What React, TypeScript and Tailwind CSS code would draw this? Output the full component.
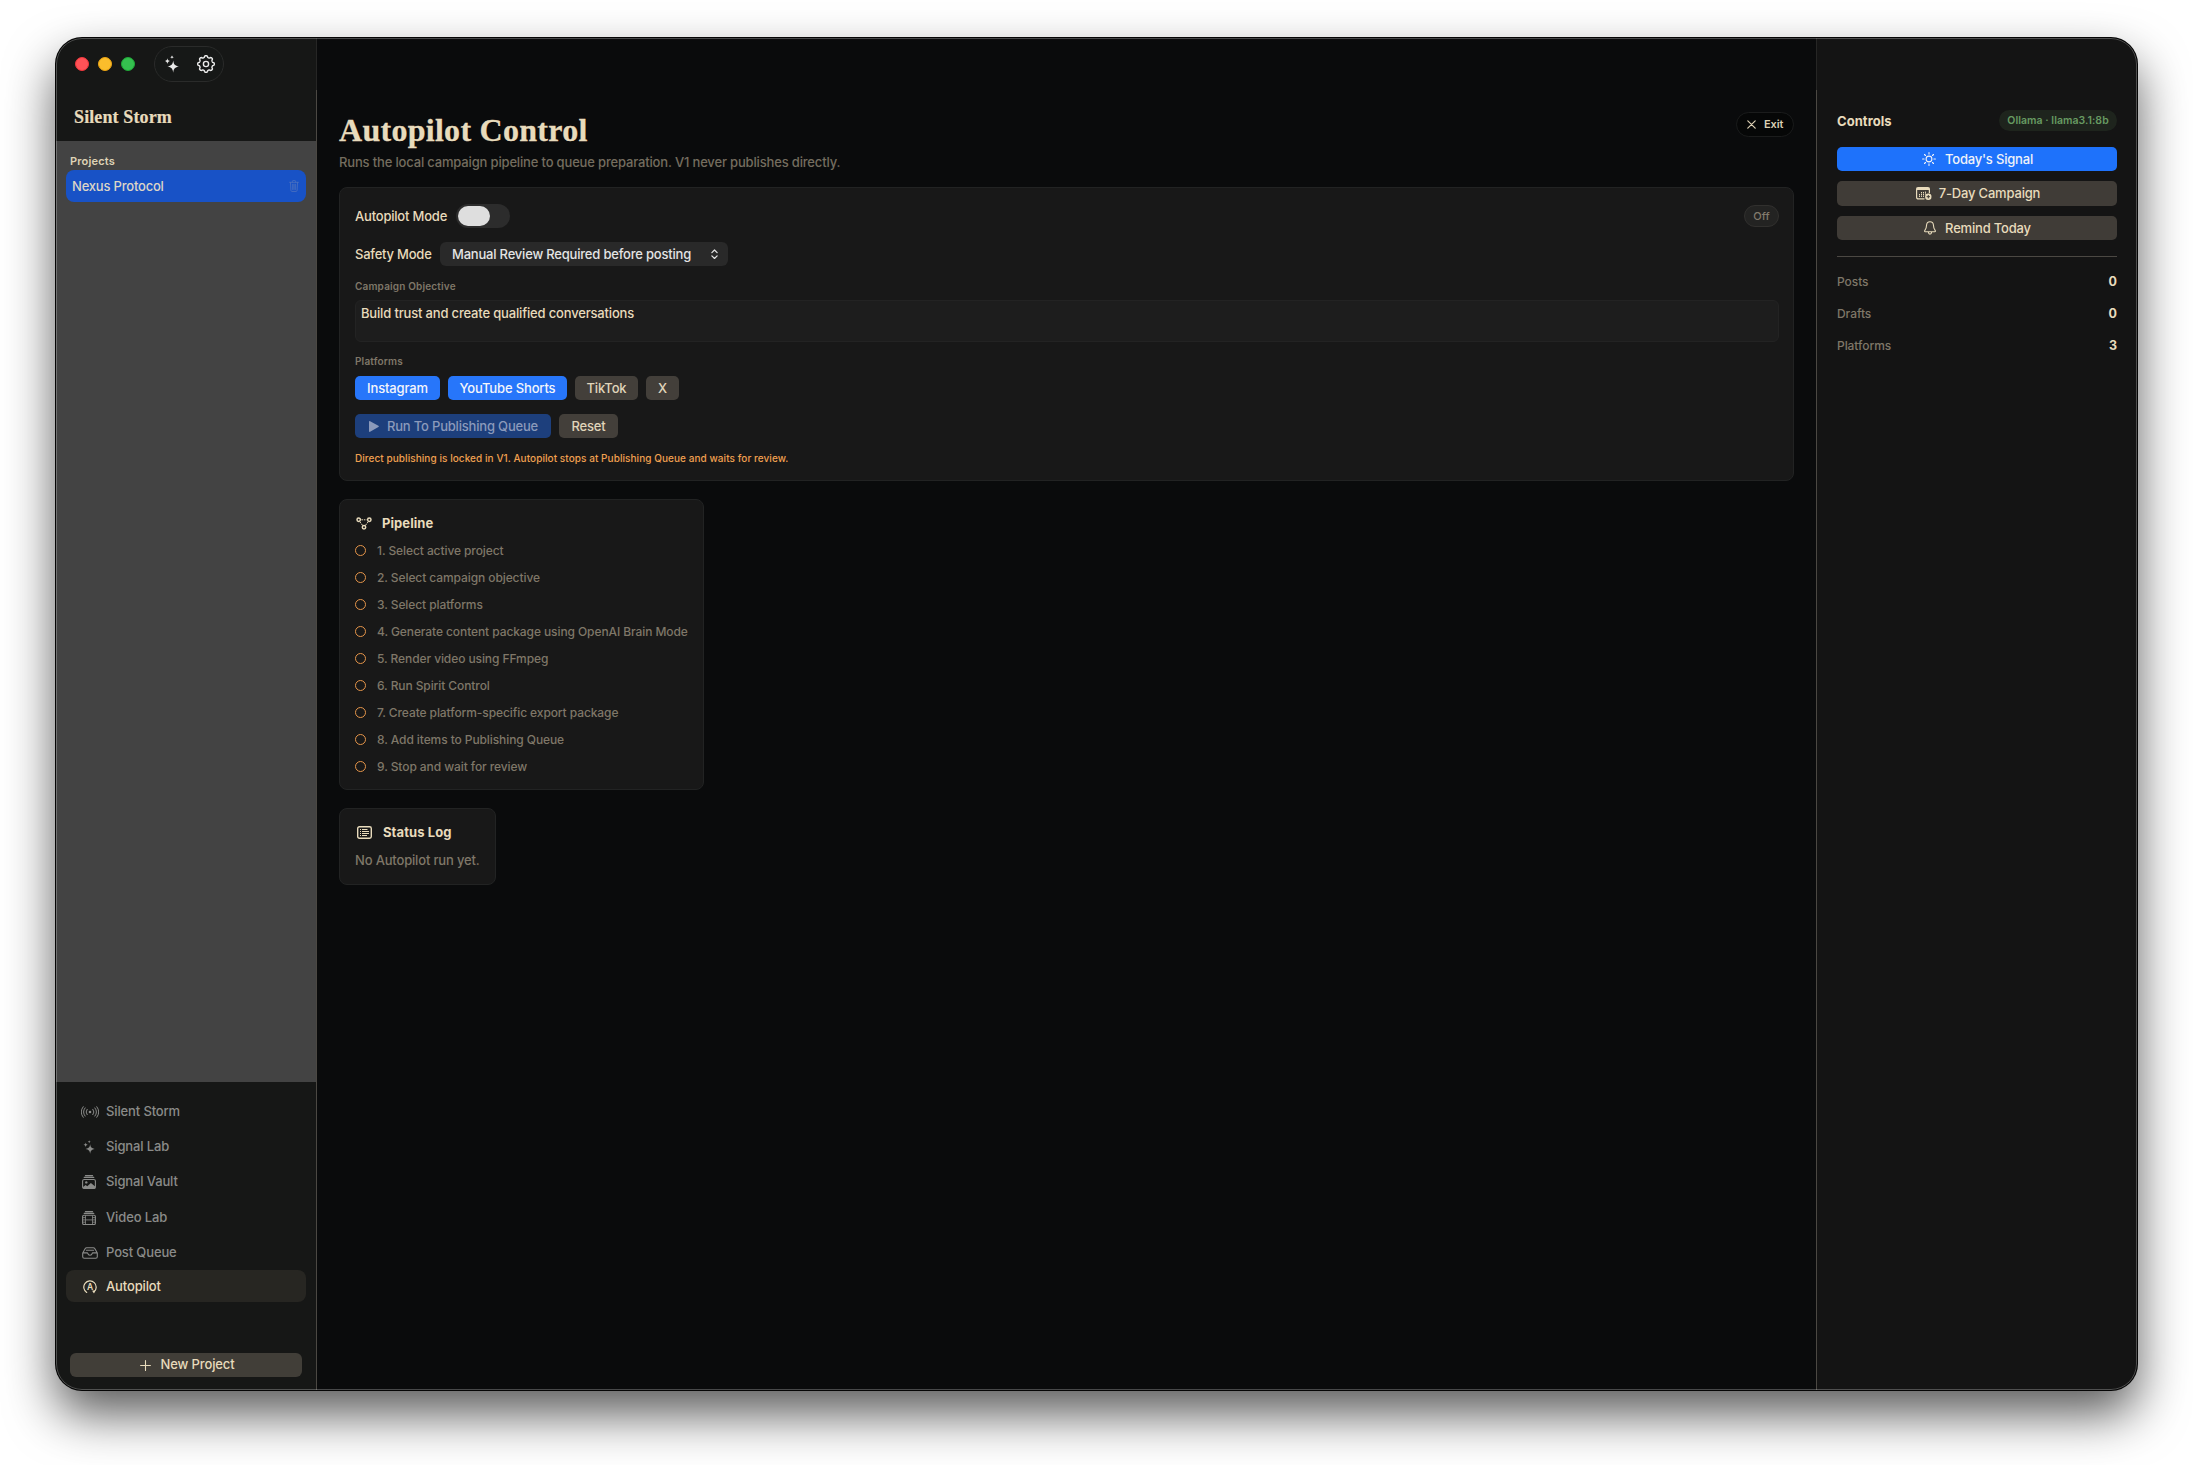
import type { ReactNode } from 'react'
import clsx from 'clsx'

type IconProps = { className?: string }

function Sparkles({ className }: IconProps) {
  return (
    <svg viewBox="0 0 16 18" fill="currentColor" className={className}>
      <path d="M9.2 5.6c.5 3.8 1.8 5.3 5.8 6-4 .7-5.3 2.2-5.8 6.1-.5-3.900-1.800-5.400-5.800-6.100 4-.700 5.300-2.200 5.800-6z" />
      <path d="M3.400 3.200c.3 1.800 1 2.500 2.900 2.900-1.900.4-2.600 1.100-2.900 3-.3-1.900-1-2.600-2.900-3 1.900-.4 2.600-1.100 2.900-2.900z" />
      <path d="M8 .300c.2 1.200.7 1.700 1.900 1.900-1.200.2-1.700.7-1.900 1.900-.2-1.200-.7-1.700-1.900-1.900 1.200-.2 1.700-.7 1.900-1.900z" />
    </svg>
  )
}

const gearPoints = Array.from({ length: 96 }, (_, i) => {
  const a = (i / 96) * Math.PI * 2
  const r = 7.5 + 0.85 * Math.tanh(2 * Math.cos(8 * a))
  return `${(9 + r * Math.cos(a)).toFixed(2)},${(9 + r * Math.sin(a)).toFixed(2)}`
}).join(' ')

function Gear({ className }: IconProps) {
  return (
    <svg viewBox="0 0 18 18" fill="none" stroke="currentColor" strokeWidth="1.4" strokeLinejoin="round" className={className}>
      <polygon points={gearPoints} />
      <circle cx="9" cy="9" r="2.600" />
    </svg>
  )
}

function Trash({ className }: IconProps) {
  return (
    <svg viewBox="0 0 10 12" fill="none" stroke="currentColor" strokeWidth="0.9" strokeLinecap="round" className={className}>
      <path d="M.6 2.300h8.800M3.400 2.200V1.300c0-.5.3-.8.8-.8h1.600c.5 0 .8.3.8.8v.9M1.500 2.500l.4 7.900c0 .6.4 1 1 1h4.200c.6 0 1-.4 1-1l.4-7.900M3.700 4.200v5.300M5 4.200v5.300M6.300 4.200v5.300" />
    </svg>
  )
}

function Waves({ className }: IconProps) {
  return (
    <svg viewBox="0 0 18 12" fill="none" stroke="currentColor" strokeWidth="1" strokeLinecap="round" className={className}>
      <circle cx="9" cy="6" r="1.300" fill="currentColor" stroke="none" />
      <path d="M6.100 3.300a4.300 4.300 0 0 0 0 5.400M11.900 3.300a4.300 4.300 0 0 1 0 5.400M4.100 1.900a6.600 6.600 0 0 0 0 8.200M13.900 1.900a6.600 6.600 0 0 1 0 8.200M2.200.700a8.700 8.700 0 0 0 0 10.600M15.800.700a8.700 8.700 0 0 1 0 10.600" />
    </svg>
  )
}

function PhotoStack({ className }: IconProps) {
  return (
    <svg viewBox="0 0 14 14" fill="none" stroke="currentColor" className={className}>
      <path d="M3.400.6h7.200M2.200 2.400h9.600" strokeWidth="1.100" strokeLinecap="round" />
      <rect x=".6" y="4.500" width="12.800" height="9" rx="1.600" strokeWidth="1.100" />
      <circle cx="4.300" cy="7.400" r="1.200" fill="currentColor" stroke="none" />
      <path d="M1 11.900l2.600-2 1.700 1.300 3.600-3.300 4.300 3.500v1.200c0 .5-.4.9-.9.900H2c-.6 0-1-.4-1-.9z" fill="currentColor" stroke="none" />
    </svg>
  )
}

function FilmStack({ className }: IconProps) {
  return (
    <svg viewBox="0 0 14 14" fill="none" stroke="currentColor" className={className}>
      <path d="M3.400.6h7.200M2.200 2.400h9.600" strokeWidth="1.100" strokeLinecap="round" />
      <rect x=".6" y="4.300" width="12.800" height="9.200" rx="1.300" strokeWidth="1.100" />
      <path d="M3.500 4.300v9.200M10.500 4.300v9.200M3.500 8.900h7M.8 6.600h2.700M.8 8.900h2.700M.8 11.200h2.700M10.500 6.600h2.700M10.500 8.900h2.700M10.500 11.200h2.700" strokeWidth=".8" />
    </svg>
  )
}

function Tray({ className }: IconProps) {
  return (
    <svg viewBox="0 0 16 12" fill="none" stroke="currentColor" strokeWidth="1.100" strokeLinejoin="round" strokeLinecap="round" className={className}>
      <path d="M.7 6.100v3.600c0 1 .6 1.600 1.600 1.600h11.400c1 0 1.600-.6 1.600-1.600V6.100L12.900 1.700c-.4-.7-.8-1-1.600-1H4.700c-.8 0-1.200.3-1.600 1zM.8 5.900h4.300c.5 0 .7.4.8.8.2 1 1 1.600 2.100 1.600s1.900-.6 2.100-1.600c.1-.4.300-.8.8-.8h4.300M4.400 3.200h7.200" />
    </svg>
  )
}

function AutoCircle({ className }: IconProps) {
  return (
    <svg viewBox="0 0 14 14" fill="none" stroke="currentColor" strokeWidth="1.200" strokeLinecap="round" className={className}>
      <path d="M3.700 12.400a6.200 6.200 0 1 1 7.400-.6" />
      <path d="M9.300 10.500h3.200l-1.700 3.100z" fill="currentColor" stroke="none" transform="rotate(-8 10.800 12)" />
      <text x="7" y="10.100" textAnchor="middle" fontSize="8.500" fontWeight="600" fontFamily="Inter" fill="currentColor" stroke="none">
        A
      </text>
    </svg>
  )
}

function Plus({ className }: IconProps) {
  return (
    <svg viewBox="0 0 11 11" stroke="currentColor" strokeWidth="1.100" strokeLinecap="round" className={className}>
      <path d="M5.500.6v9.800M.6 5.500h9.800" />
    </svg>
  )
}

function Close({ className }: IconProps) {
  return (
    <svg viewBox="0 0 9 9" stroke="currentColor" strokeWidth="1.200" strokeLinecap="round" className={className}>
      <path d="M.8.8l7.400 7.400M8.200.8L.8 8.200" />
    </svg>
  )
}

function UpDown({ className }: IconProps) {
  return (
    <svg viewBox="0 0 8 12" fill="none" stroke="currentColor" strokeWidth="1.400" strokeLinecap="round" strokeLinejoin="round" className={className}>
      <path d="M1 4.100l3-3 3 3M1 7.900l3 3 3-3" />
    </svg>
  )
}

function Play({ className }: IconProps) {
  return (
    <svg viewBox="0 0 10 11" fill="currentColor" className={className}>
      <path d="M0 .8C0 .2.500-.1 1.100.200l8.300 4.600c.6.300.6 1 0 1.300l-8.300 4.700C.5 11.100 0 10.800 0 10.200z" />
    </svg>
  )
}

function Nodes({ className }: IconProps) {
  return (
    <svg viewBox="0 0 16 13" fill="none" stroke="currentColor" className={className}>
      <g strokeWidth="1.500">
        <circle cx="2.700" cy="2.800" r="1.700" />
        <circle cx="13.300" cy="2.800" r="1.700" />
        <circle cx="8" cy="10.200" r="1.700" />
      </g>
      <path d="M5.400 2.800h5.200M4 5l2.600 3.400M12 5L9.400 8.400" strokeWidth="1" strokeDasharray="1.600 .8" />
    </svg>
  )
}

function LogIcon({ className }: IconProps) {
  return (
    <svg viewBox="0 0 15 13" fill="none" stroke="currentColor" className={className}>
      <rect x=".7" y=".7" width="13.600" height="11.600" rx="1.700" strokeWidth="1.400" />
      <path d="M3 3.500h1M3 5.500h1M3 7.500h1M3 9.500h1M5 3.500h5.500M5 5.500h7M5 7.500h7M5 9.500h5" strokeWidth="1" />
    </svg>
  )
}

function Sun({ className }: IconProps) {
  return (
    <svg viewBox="0 0 14 14" fill="none" stroke="currentColor" strokeWidth="1.100" strokeLinecap="round" className={className}>
      <circle cx="7" cy="7" r="2.900" />
      <path d="M7 .6v1.500M7 11.900v1.500M.6 7h1.500M11.900 7h1.500M2.500 2.500l1 1M10.500 10.500l1 1M11.500 2.500l-1 1M3.500 10.500l-1 1" />
    </svg>
  )
}

function CalendarPlus({ className }: IconProps) {
  return (
    <svg viewBox="0 0 16 13" fill="none" stroke="currentColor" className={className}>
      <path d="M8.500 11.900H2.300c-1 0-1.700-.6-1.700-1.600V2.200C.6 1.200 1.300.600 2.300.600h9.400c1 0 1.700.6 1.700 1.600v4" strokeWidth="1.200" />
      <path d="M.6 1.900h12.800" strokeWidth="2.200" />
      <path d="M3.500 7v3M5.500 5v5M7.500 5v5M9.500 4.600v3" strokeWidth="1" strokeDasharray="1.300 .5" />
      <circle cx="12.300" cy="9.700" r="3.200" fill="currentColor" stroke="none" />
      <path d="M12.300 8v3.400M10.600 9.700H14" stroke="#403c37" strokeWidth="1" />
    </svg>
  )
}

function Bell({ className }: IconProps) {
  return (
    <svg viewBox="0 0 12 14" fill="none" stroke="currentColor" strokeWidth="1.100" strokeLinejoin="round" className={className}>
      <path d="M6 .8C3.900.8 2.600 2.300 2.500 4.500 2.400 7.300 2 8 1 9.200c-.5.6-.7 1.600.3 1.600h9.400c1 0 .8-1 .3-1.600C10 8 9.600 7.300 9.500 4.500 9.400 2.300 8.100.8 6 .8zM4.400 11.200c.1 1.200.7 1.900 1.600 1.900s1.500-.7 1.600-1.900" />
    </svg>
  )
}

const navItems = [
  { label: 'Silent Storm', icon: <Waves className="w-[18px]" />, gap: '' },
  { label: 'Signal Lab', icon: <Sparkles className="h-[14px]" />, gap: 'mt-[3px]' },
  { label: 'Signal Vault', icon: <PhotoStack className="mr-px w-[14px]" />, gap: 'mt-[3px]' },
  { label: 'Video Lab', icon: <FilmStack className="mr-px w-[14px]" />, gap: 'mt-1' },
  { label: 'Post Queue', icon: <Tray className="w-4" />, gap: 'mt-[3px]' },
  { label: 'Autopilot', icon: <AutoCircle className="w-[14px]" />, gap: 'mt-px', active: true },
]

const steps = [
  'Select active project',
  'Select campaign objective',
  'Select platforms',
  'Generate content package using OpenAI Brain Mode',
  'Render video using FFmpeg',
  'Run Spirit Control',
  'Create platform-specific export package',
  'Add items to Publishing Queue',
  'Stop and wait for review',
]

const platforms = [
  { label: 'Instagram', className: 'w-[85px] bg-[#2776fa] text-[#f4f5fb]' },
  { label: 'YouTube Shorts', className: 'w-[119px] bg-[#2776fa] text-[#f4f5fb]' },
  { label: 'TikTok', className: 'w-[63px] bg-[#433f3a] text-[#e0d5ba]' },
  { label: 'X', className: 'w-[33px] bg-[#433f3a] text-[#e0d5ba]' },
]

const stats = [
  { label: 'Posts', value: 0 },
  { label: 'Drafts', value: 0 },
  { label: 'Platforms', value: 3 },
]

function Divider() {
  return (
    <div className="flex w-px shrink-0 flex-col">
      <div className="h-[52px] bg-[#262625]" />
      <div className="flex-1 bg-[#4b4843]" />
    </div>
  )
}

function Card({ className, children }: { className?: string; children: ReactNode }) {
  return (
    <div className={clsx('rounded-lg border border-[#222323] bg-[#181818] pl-[15px]', className)}>
      {children}
    </div>
  )
}

function Caption({ className, children }: { className?: string; children: ReactNode }) {
  return (
    <p className={clsx('text-[10px]/[14px] font-semibold tracking-[0.17px] text-[#7f7768]', className)}>
      {children}
    </p>
  )
}

function Sidebar() {
  return (
    <aside className="flex w-[260px] shrink-0 flex-col bg-[#161716]">
      <div className="flex h-[52px] items-center pl-[19px]">
        <div className="flex gap-[9px]">
          <span className="size-[14px] rounded-full border border-[#f0383d] bg-[#ff5257]" />
          <span className="size-[14px] rounded-full border border-[#eba413] bg-[#fbbd2c]" />
          <span className="size-[14px] rounded-full border border-[#1fa838] bg-[#35c04f]" />
        </div>
        <div className="ml-[19px] flex h-9 w-[70px] items-center justify-between rounded-full border border-[#2a2b2a] bg-[#161817] pl-[9px] pr-2 text-[#e9e9e9]">
          <Sparkles className="h-[18px]" />
          <Gear className="size-[18px]" />
        </div>
      </div>
      <h1 className="h-[51px] pl-[18px] pt-[17px] font-['Liberation_Serif',serif] text-[18px]/[20px] font-bold tracking-[0.12px] text-[#e8dbbc] [-webkit-text-stroke:0.2px]">
        Silent Storm
      </h1>
      <div className="flex-1 bg-[#434343] px-[10px] pt-3">
        <p className="pl-1 text-[11px]/[16px] font-semibold tracking-[0.18px] text-[#dfd3b6]">Projects</p>
        <div className="mt-px flex h-8 items-center justify-between rounded-lg bg-[#1852c6] pl-1.5 pr-[7px] pt-0.5 text-[13px] font-medium tracking-[-0.2px] text-[#ddd6c6]">
          Nexus Protocol
          <Trash className="mb-0.5 w-[10px] text-[#4a6fc0]" />
        </div>
      </div>
      <div className="flex h-[308px] flex-col px-[10px] pb-[13px] pt-[14px]">
        {navItems.map(({ label, icon, gap, active }) => (
          <div
            key={label}
            className={clsx(
              'flex h-8 items-center gap-[7px] rounded-lg pl-[14px] text-[13px] font-medium tracking-[-0.13px]',
              gap,
              active ? 'bg-[#272622] pt-0.5 text-[#e8dbbc]' : 'text-[#8a8b89]',
            )}
          >
            <span className="flex w-[19px] justify-center">{icon}</span>
            {label}
          </div>
        ))}
        <button className="mx-1 mt-auto flex h-6 items-center justify-center gap-[10px] rounded-md bg-[#413e38] pl-0.5 text-[13px] font-medium tracking-[-0.12px] text-[#e8dbbc]">
          <Plus className="w-[11px]" />
          New Project
        </button>
      </div>
    </aside>
  )
}

function AutopilotForm() {
  return (
    <Card className="mt-[17px] pb-[15px] pr-[14px] pt-4">
      <div className="flex h-6 items-center">
        <span className="w-[101px] pt-0.5 text-[13px] font-medium tracking-[-0.2px] text-[#e8dbbc]">Autopilot Mode</span>
        <div className="flex h-6 w-[54px] items-center rounded-full bg-[#2c2c2c] pl-0.5">
          <span className="h-5 w-8 rounded-full bg-[#dedede]" />
        </div>
        <span className="ml-auto flex h-[22px] w-[35px] items-center justify-center rounded-full border border-[#31302e] bg-[#232322] text-[11px] font-medium text-[#817a6c]">
          Off
        </span>
      </div>
      <div className="mt-[14px] flex h-6 items-center">
        <span className="w-[85px] pt-0.5 text-[13px] font-medium tracking-[-0.22px] text-[#e8dbbc]">Safety Mode</span>
        <div className="flex h-6 w-[288px] items-center justify-between rounded-md bg-[#292929] pl-3 pr-[10px] text-[13px] font-medium tracking-[-0.2px] text-[#e4e4e4]">
          <span className="pt-0.5">Manual Review Required before posting</span>
          <UpDown className="w-[7px]" />
        </div>
      </div>
      <Caption className="mt-[13px]">Campaign Objective</Caption>
      <div className="mt-[7px] h-[42px] rounded-md border border-[#232323] bg-[#1d1d1d] pl-[5px] pt-1 text-[13px]/[16px] font-[450] tracking-[-0.17px] text-[#e8dbbc]">
        Build trust and create qualified conversations
      </div>
      <Caption className="mt-3">Platforms</Caption>
      <div className="mt-2 flex gap-2">
        {platforms.map(({ label, className }) => (
          <button
            key={label}
            className={clsx('h-6 rounded-[5px] pt-0.5 text-[13px] font-medium tracking-[-0.15px]', className)}
          >
            {label}
          </button>
        ))}
      </div>
      <div className="mt-[14px] flex gap-2 text-[13px] font-medium tracking-[-0.19px]">
        <button className="flex h-6 w-[196px] items-center gap-2 rounded-[5px] bg-[#1d3f7c] pl-[14px] text-[#8b9abb]">
          <Play className="w-[10px]" />
          <span className="pt-0.5">Run To Publishing Queue</span>
        </button>
        <button className="h-6 w-[59px] rounded-[5px] bg-[#433f3a] pt-0.5 text-[#e0d5ba]">Reset</button>
      </div>
      <p className="mt-[13px] text-[10px]/[14px] font-[450] tracking-[0.06px] text-[#f0a050]">
        Direct publishing is locked in V1. Autopilot stops at Publishing Queue and waits for review.
      </p>
    </Card>
  )
}

function Controls() {
  return (
    <aside className="w-[320px] shrink-0 bg-[#141414] px-5 pt-[72px]">
      <div className="flex h-[21px] items-center justify-between">
        <h2 className="pt-0.5 text-[13px] font-bold tracking-[0.06px] text-[#e8dbbc]">Controls</h2>
        <span className="flex h-[21px] w-[118px] items-center justify-center rounded-full bg-[#1e241d] text-[10.5px] font-semibold tracking-[0.04px] text-[#679a62]">
          Ollama · llama3.1:8b
        </span>
      </div>
      <div className="mt-4 flex flex-col gap-[10px] text-[13px] font-medium tracking-[-0.19px] text-[#e8dbbc]">
        <button className="flex h-6 items-center justify-center gap-[9px] rounded-[5px] bg-[#1e72fb] pl-px text-[#f0f2f8]">
          <Sun className="w-[14px]" />
          <span className="pt-0.5">Today's Signal</span>
        </button>
        <button className="flex h-[25px] items-center justify-center gap-[7px] rounded-[5px] bg-[#403c37] pl-0.5">
          <CalendarPlus className="w-4" />
          7-Day Campaign
        </button>
        <button className="flex h-6 items-center justify-center gap-[9px] rounded-[5px] bg-[#403c37] pl-px">
          <Bell className="w-3" />
          <span className="pt-0.5">Remind Today</span>
        </button>
      </div>
      <div className="mt-4 h-px bg-[#4b4843]" />
      <div className="mt-[17px] flex flex-col gap-4">
        {stats.map(({ label, value }) => (
          <div key={label} className="flex h-4 items-center justify-between">
            <span className="text-[12px] font-[450] tracking-[-0.06px] text-[#7f7768]">{label}</span>
            <span className="text-[12.5px] font-bold text-[#e8dbbc]">{value}</span>
          </div>
        ))}
      </div>
    </aside>
  )
}

export default function App() {
  return (
    <div className="h-[1465px] w-[2193px] overflow-hidden bg-white pl-14 pt-[38px] font-['Inter',sans-serif]">
      <div className="relative flex h-[1352px] w-[2081px] overflow-hidden rounded-[26px] bg-[#0a0b0c] shadow-[0_0_0_1px_#050505,0_24px_50px_rgba(0,0,0,0.65)]">
        <Sidebar />
        <Divider />
        <main className="flex-1 px-[22px] pt-[74px]">
          <div className="flex items-start justify-between">
            <h2 className="font-['Liberation_Serif',serif] text-[32px]/[36px] font-bold tracking-[0.28px] text-[#e8dbbc] [-webkit-text-stroke:0.3px]">
              Autopilot Control
            </h2>
            <button className="flex h-[25px] w-[58px] items-center gap-2 rounded-full border border-[#1b1c1c] bg-[#060707] pl-[10px] text-[11px] font-semibold tracking-[-0.1px] text-[#dcd0b4]">
              <Close className="w-[9px]" />
              Exit
            </button>
          </div>
          <p className="mt-1.5 text-[13px]/[16px] font-[450] tracking-[-0.165px] text-[#746d5f]">
            Runs the local campaign pipeline to queue preparation. V1 never publishes directly.
          </p>
          <AutopilotForm />
          <Card className="mt-[18px] h-[291px] w-[365px] pt-[15px]">
            <h3 className="flex h-4 items-center gap-[10px] pl-px text-[13px] font-bold text-[#e8dbbc]">
              <Nodes className="w-4" />
              <span className="pt-0.5 tracking-[0.06px]">Pipeline</span>
            </h3>
            <ol className="mt-1.5">
              {steps.map((step, i) => (
                <li key={step} className="flex h-[27px] items-center gap-[11px] text-[12px] font-[450] tracking-[-0.09px] text-[#7f7768]">
                  <span className="size-[11px] rounded-full border border-[#e5954a]" />
                  {i + 1}. {step}
                </li>
              ))}
            </ol>
          </Card>
          <Card className="mt-[18px] h-[77px] w-[157px] pt-[15px]">
            <h3 className="flex h-4 items-center gap-[11px] pl-[2px] text-[13px] font-bold text-[#e8dbbc]">
              <LogIcon className="w-[15px]" />
              <span className="pt-0.5 tracking-[0.1px]">Status Log</span>
            </h3>
            <p className="mt-3 text-[13px]/[16px] font-[450] tracking-[-0.17px] text-[#7f7768]">No Autopilot run yet.</p>
          </Card>
        </main>
        <Divider />
        <Controls />
        {/* light inner rim of the window */}
        <div className="pointer-events-none absolute inset-0 rounded-[26px] border border-white/25" />
      </div>
    </div>
  )
}
